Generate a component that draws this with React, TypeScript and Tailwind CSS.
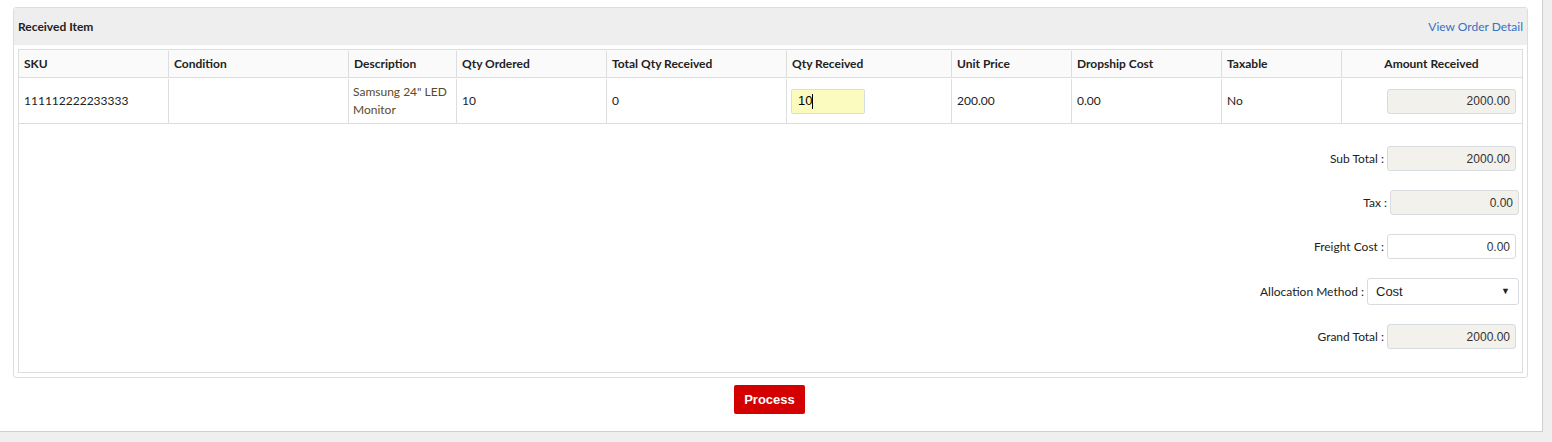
import React from "react";

const cols = [
  { name: "SKU", w: 150 },
  { name: "Condition", w: 180 },
  { name: "Description", w: 108 },
  { name: "Qty Ordered", w: 150 },
  { name: "Total Qty Received", w: 180 },
  { name: "Qty Received", w: 165 },
  { name: "Unit Price", w: 120 },
  { name: "Dropship Cost", w: 150 },
  { name: "Taxable", w: 120 },
  { name: "Amount Received", w: 179 },
];

function ROInput({ value, width = 129, mr = 0 }: { value: string; width?: number; mr?: number }) {
  return (
    <div
      className="h-[25px] rounded-[3px] border border-[#d8dbe0] bg-[#f2f1eb] flex items-center justify-end pr-[5px] text-[12px] text-[#333] font-['Liberation_Sans',Arial,sans-serif]"
      style={{ width, marginRight: mr }}
    >
      {value}
    </div>
  );
}

export default function App() {
  return (
    <div className="w-[1552px] h-[442px] bg-[#efefef] font-['Lato','Open_Sans',sans-serif] text-[#333] overflow-hidden">
      <div className="w-[1543px] h-[432px] bg-white border-r border-b border-[#cfcfcf] pt-[7px] pl-[13px] pr-[14px]">
        <div className="w-[1515px] border border-[#dddddd] rounded-[3px]">
          <div className="h-[37px] bg-[#eeeeee] flex items-center justify-between px-[4px] pt-[1px]">
            <span className="text-[12px] font-bold text-[#222]">Received Item</span>
            <span className="text-[12px] text-[#3b6fc0]">View Order Detail</span>
          </div>
          <div className="p-[4px]">
            <div className="border border-[#dddddd] h-[324px] flex flex-col">
              <div className="flex h-[28px] bg-[#fafafa] border-b border-[#dddddd] pt-[1px]">
                {cols.map((c, i) => (
                  <div
                    key={c.name}
                    className={`flex items-center text-[12px] font-bold text-[#222] px-[5px] ${i < cols.length - 1 ? "border-r border-[#dddddd]" : "justify-center"}`}
                    style={{ width: c.w }}
                  >
                    {c.name}
                  </div>
                ))}
              </div>
              <div className="flex h-[46px] border-b border-[#dddddd] text-[12px] text-[#222] pt-[1px]">
                <div className="flex items-center px-[5px] border-r border-[#dddddd]" style={{ width: 150 }}>111112222233333</div>
                <div className="border-r border-[#dddddd]" style={{ width: 180 }} />
                <div className="flex items-center px-[4px] border-r border-[#dddddd] leading-[18px] text-[#5a4a2a]" style={{ width: 108 }}>
                  Samsung 24" LED Monitor
                </div>
                <div className="flex items-center px-[5px] border-r border-[#dddddd]" style={{ width: 150 }}>10</div>
                <div className="flex items-center px-[5px] border-r border-[#dddddd]" style={{ width: 180 }}>0</div>
                <div className="flex items-center px-[4px] border-r border-[#dddddd]" style={{ width: 165 }}>
                  <div className="w-[74px] h-[25px] rounded-[2px] border border-[#d6dde8] bg-[#fbfbbf] flex items-center pl-[6px] text-[13px] text-black font-['Liberation_Sans',Arial,sans-serif]">
                    10<span className="inline-block w-[1px] h-[15px] bg-black" />
                  </div>
                </div>
                <div className="flex items-center px-[5px] border-r border-[#dddddd]" style={{ width: 120 }}>200.00</div>
                <div className="flex items-center px-[5px] border-r border-[#dddddd]" style={{ width: 150 }}>0.00</div>
                <div className="flex items-center px-[5px] border-r border-[#dddddd]" style={{ width: 120 }}>No</div>
                <div className="flex items-center justify-end pr-[5px]" style={{ width: 179 }}>
                  <ROInput value="2000.00" />
                </div>
              </div>
              <div className="flex flex-col items-end pt-[22px] pr-[6px] gap-[19px] text-[12px] text-[#222]">
                <div className="flex items-center h-[25px]">
                  <span className="mr-[3px]">Sub Total :</span>
                  <ROInput value="2000.00" mr={0} />
                </div>
                <div className="flex items-center h-[25px]">
                  <span className="mr-[3px]">Tax :</span>
                  <ROInput value="0.00" mr={-3} />
                </div>
                <div className="flex items-center h-[25px]">
                  <span className="mr-[3px]">Freight Cost :</span>
                  <div className="w-[129px] h-[25px] rounded-[3px] border border-[#d8dbe0] bg-white flex items-center justify-end pr-[5px] text-[12px] text-[#333] font-['Liberation_Sans',Arial,sans-serif]">
                    0.00
                  </div>
                </div>
                <div className="flex items-center h-[27px]">
                  <span className="mr-[3px]">Allocation Method :</span>
                  <div className="w-[152px] h-[27px] mr-[-3px] rounded-[3px] border border-[#d8dbe0] bg-white flex items-center justify-between pl-[8px] pr-[8px] text-[13px] text-[#222] font-['Liberation_Sans',Arial,sans-serif]">
                    <span>Cost</span>
                    <span className="text-[9px]">▼</span>
                  </div>
                </div>
                <div className="flex items-center h-[25px]">
                  <span className="mr-[3px]">Grand Total :</span>
                  <ROInput value="2000.00" />
                </div>
              </div>
            </div>
          </div>
        </div>
        <div className="flex justify-center pt-[7px] pr-[2px]">
          <div className="w-[71px] h-[29px] bg-[#d40000] rounded-[2px] flex items-center justify-center text-white text-[13px] font-bold font-['Liberation_Sans',Arial,sans-serif]">
            Process
          </div>
        </div>
      </div>
    </div>
  );
}
